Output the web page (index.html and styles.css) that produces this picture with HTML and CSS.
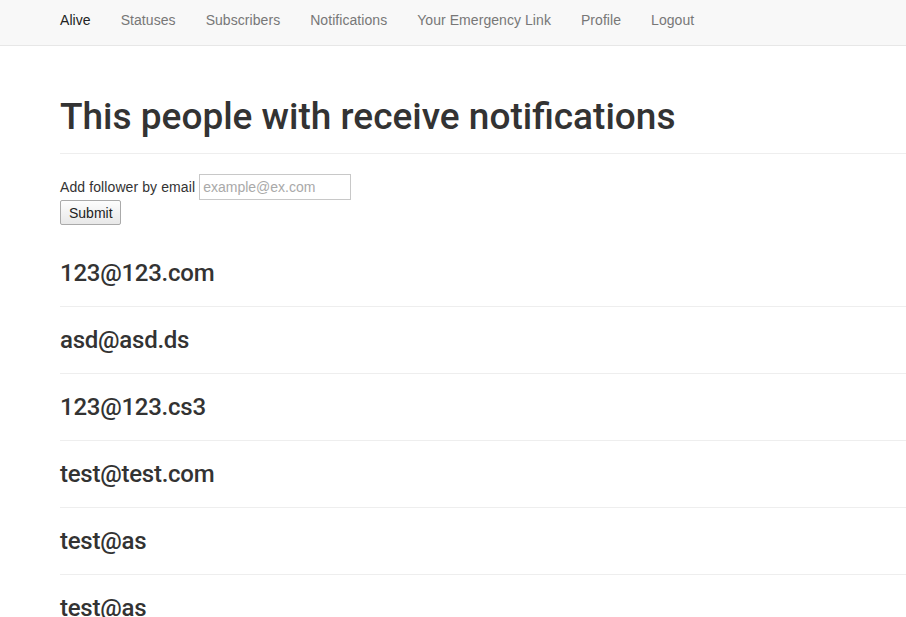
FILE: index.html
```html
<!DOCTYPE html>
<html lang="en">
<head>
    <meta charset="UTF-8">
    <meta name="viewport" content="width=device-width, initial-scale=1.0">
    <title>Alive - Subscribers</title>
    <link rel="stylesheet" href="styles.css">
</head>
<body>
    <nav class="navbar">
        <ul class="nav">
            <li><a href="#" class="active">Alive</a></li>
            <li><a href="#">Statuses</a></li>
            <li><a href="#">Subscribers</a></li>
            <li><a href="#">Notifications</a></li>
            <li><a href="#">Your Emergency Link</a></li>
            <li><a href="#">Profile</a></li>
            <li><a href="#">Logout</a></li>
        </ul>
    </nav>

    <div class="container">
        <div class="page-header">
            <h1>This people with receive notifications</h1>
        </div>

        <form class="follower-form">
            <div class="form-row">
                <label for="email">Add follower by email</label>
                <input type="text" id="email" placeholder="example@ex.com">
            </div>
            <button type="submit" class="btn">Submit</button>
        </form>

        <div class="followers">
            <h3>123@123.com</h3>
            <hr>
            <h3>asd@asd.ds</h3>
            <hr>
            <h3>123@123.cs3</h3>
            <hr>
            <h3>test@test.com</h3>
            <hr>
            <h3>test@as</h3>
            <hr>
            <h3>test@as</h3>
            <hr>
        </div>
    </div>
</body>
</html>
```

FILE: styles.css
```css
body {
    margin: 0;
    font-family: 'Liberation Sans', Arial, sans-serif;
    font-size: 14px;
    color: #333;
    background: #fff;
}
.navbar {
    background: #f8f8f8;
    border-bottom: 1px solid #e7e7e7;
    height: 45px;
}
.nav {
    display: flex;
    list-style: none;
    margin: 0;
    padding: 0 0 0 45px;
}
.nav a {
    display: block;
    padding: 10px 15px 15px;
    line-height: 20px;
    letter-spacing: 0.06px;
    color: #777;
    text-decoration: none;
}
.nav a.active {
    color: #222;
}
.container {
    padding-left: 60px;
}
.page-header {
    margin-top: 51px;
    padding-bottom: 16px;
    border-bottom: 1px solid #eee;
}
.page-header h1 {
    margin: 0;
    font-family: Roboto, 'Liberation Sans', sans-serif;
    font-size: 37px;
    font-weight: 500;
    line-height: 40px;
}
.follower-form {
    margin-top: 20px;
}
.form-row {
    display: flex;
    align-items: center;
    gap: 4px;
    height: 26px;
    letter-spacing: 0.1px;
}
.form-row input {
    box-sizing: border-box;
    width: 152px;
    height: 26px;
    padding: 2px 3px;
    border: 1px solid #c8c8c8;
    font-family: inherit;
    font-size: 14px;
    color: #333;
}
.form-row input::placeholder {
    color: #a9a9a9;
}
.btn {
    box-sizing: border-box;
    height: 25px;
    width: 61px;
    padding: 0 8px;
    border: 1px solid #aaa;
    border-radius: 2px;
    background: linear-gradient(#fdfdfd, #e8e8e8);
    font-family: inherit;
    font-size: 14px;
    color: #222;
}
.followers h3 {
    margin: 35px 0 0;
    font-family: Roboto, 'Liberation Sans', sans-serif;
    font-size: 24px;
    font-weight: 500;
    line-height: 26px;
    letter-spacing: -0.25px;
}
.followers hr {
    margin: 20px 0 0;
    border: 0;
    border-top: 1px solid #eee;
}
.followers hr + h3 {
    margin-top: 20px;
}
```
